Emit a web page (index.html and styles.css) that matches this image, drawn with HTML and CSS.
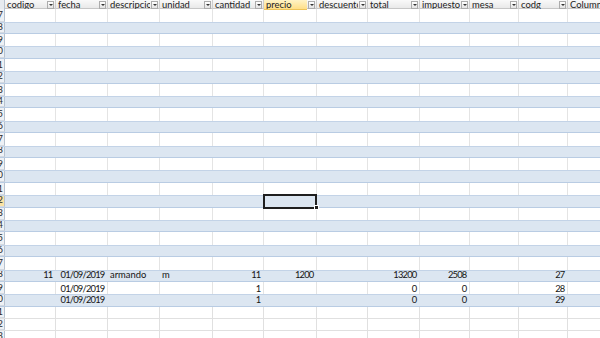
FILE: index.html
```html
<!DOCTYPE html>
<html lang="es">
<head>
  <meta charset="UTF-8" />
  <meta name="viewport" content="width=device-width, initial-scale=1.0"/>
  <title>Ventas</title>
  <link rel="stylesheet" href="styles.css">
</head>
<body>

  <div class="sheet" id="sheet">
    <div class="row head" id="headRow">
      <div class="rownum"></div>
    </div>
  </div>

  <script>
    const cols = ["codigo", "fecha", "descripcio", "unidad", "cantidad", "precio",
                  "descuento", "total", "impuesto", "mesa", "codg", "Column1"];
    const align = ["r", "r", "l", "l", "r", "r", "r", "r", "r", "r", "r", "l"];

    // rows that hold values, keyed by position below the header
    const data = {
      21: ["11", "01/09/2019", "armando", "m", "11", "1200", "", "13200", "2508", "", "27", ""],
      22: ["", "01/09/2019", "", "", "1", "", "", "0", "0", "", "28", ""],
      23: ["", "01/09/2019", "", "", "1", "", "", "0", "0", "", "29", ""]
    };

    const firstRow = 17;
    const tableRows = 24;
    const totalRows = 27;
    const active = { row: 15, col: 5 };

    const head = document.getElementById("headRow");
    cols.forEach((name, i) => {
      const cell = document.createElement("div");
      cell.className = "cell hcell";
      const label = document.createElement("span");
      label.className = "label" + (i === active.col ? " picked" : "");
      label.textContent = name;
      cell.appendChild(label);
      if (i < cols.length - 1) {
        const btn = document.createElement("span");
        btn.className = "filter";
        cell.appendChild(btn);
      }
      head.appendChild(cell);
    });

    const sheet = document.getElementById("sheet");
    for (let r = 0; r < totalRows; r++) {
      const row = document.createElement("div");
      let kind = "out";
      if (r < tableRows) kind = r % 2 ? "band" : "plain";
      row.className = "row " + kind;

      const num = document.createElement("div");
      num.className = "rownum" + (r === active.row ? " picked" : "");
      num.textContent = firstRow + r;
      row.appendChild(num);

      const values = data[r] || [];
      cols.forEach((_, c) => {
        const cell = document.createElement("div");
        cell.className = "cell " + (align[c] === "r" ? "right" : "left");
        if (r === active.row && c === active.col) cell.classList.add("active");
        cell.textContent = values[c] || "";
        row.appendChild(cell);
      });
      sheet.appendChild(row);
    }
  </script>
</body>
</html>
```

FILE: styles.css
```css
body {
  margin: 0;
  font-family: Lato, "Liberation Sans", sans-serif;
  font-size: 9.4px;
  color: #141414;
  background: #fff;
  overflow: hidden;
}

.sheet {
  width: 640px;
}

.row {
  display: grid;
  grid-template-columns: 5px 51px 52px 52px 53px 51px 53px 51px 52px 50px 49px 49px 70px;
  height: 12.4px;
  box-sizing: border-box;
}

.cell {
  display: flex;
  align-items: flex-end;
  padding: 0 2px 1.5px;
  box-sizing: border-box;
  border-right: 1px solid #e4e4e4;
  white-space: nowrap;
  overflow: hidden;
  line-height: 9px;
}

/* numbers and dates sit to the right, with tighter digits */
.cell.right {
  justify-content: flex-end;
  letter-spacing: -0.8px;
  padding-right: 2.5px;
}

.rownum {
  display: flex;
  align-items: flex-end;
  justify-content: flex-end;
  padding: 0 1px 1.5px 0;
  box-sizing: border-box;
  background: #eef1f5;
  border-right: 1px solid #b7c2cf;
  border-bottom: 1px solid #d3d9e1;
  color: #2a2a2a;
  overflow: hidden;
  line-height: 9px;
}

.rownum.picked {
  background: #fbe3a4;
}

/* header row with the table column names */
.head {
  height: 9.3px;
  background: linear-gradient(#f9f9f9, #e9e9e9);
  border-bottom: 1px solid #c6c6c6;
}

.head .rownum {
  background: #e7ebf0;
  border-bottom: none;
}

.hcell {
  align-items: stretch;
  padding: 0 1px 0 0;
  border-right: 1px solid #cdcdcd;
  color: #222;
  overflow: visible;
}

.hcell .label {
  flex: 1;
  min-width: 0;
  overflow: hidden;
  padding-left: 2px;
  line-height: 9px;
  display: flex;
  align-items: flex-end;
}

.hcell .label.picked {
  background: linear-gradient(#fff3c6, #ffdf88);
  border-bottom: 1px solid #eec45a;
  margin-bottom: -1px;
}

.filter {
  position: relative;
  flex: none;
  align-self: center;
  width: 7px;
  height: 8px;
  margin-left: 1px;
  box-sizing: border-box;
  border: 1px solid #acacac;
  background: linear-gradient(#ffffff, #e2e2e2);
}

.filter::after {
  content: "";
  position: absolute;
  left: 1px;
  top: 2.5px;
  border-left: 2px solid transparent;
  border-right: 2px solid transparent;
  border-top: 2px solid #333;
}

/* table body banding */
.band {
  background: #dce6f1;
  border-top: 1px solid #c3d3e7;
  border-bottom: 1px solid #b9cce3;
}

.band .cell {
  border-right-color: transparent;
}

.out {
  border-bottom: 1px solid #e0e0e0;
}

.out .cell {
  border-right-color: #e0e0e0;
}

/* selected cell */
.cell.active {
  position: relative;
  overflow: visible;
  z-index: 2;
}

.cell.active::after {
  content: "";
  position: absolute;
  left: -1px;
  top: -2px;
  right: -1px;
  bottom: -2px;
  border: 2px solid #1f1f1f;
}

.cell.active::before {
  content: "";
  position: absolute;
  right: -3px;
  bottom: -3px;
  width: 3px;
  height: 3px;
  background: #1f1f1f;
  border: 1px solid #fff;
  z-index: 1;
}
```
